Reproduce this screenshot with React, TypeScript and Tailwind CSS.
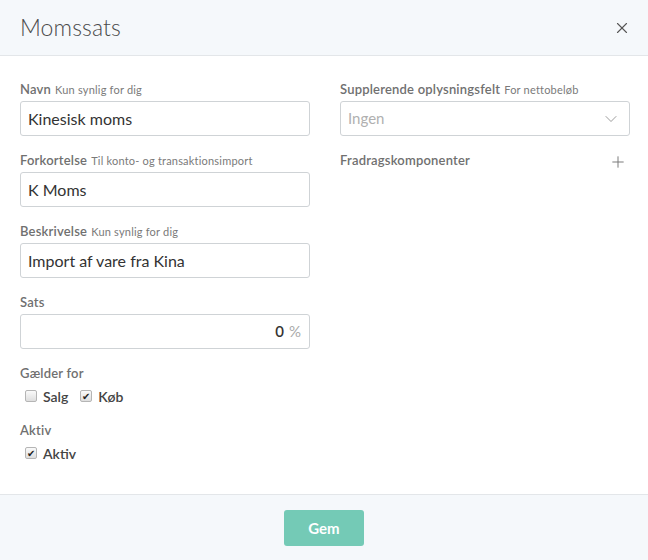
import { X, ChevronDown, Plus } from "lucide-react";

function Label({ title, hint }: { title: string; hint?: string }) {
  return (
    <div className="h-[18px] leading-[18px] mb-[3px] text-[13px] text-[#707070] tracking-[0.2px]">
      <span className="font-semibold">{title}</span>
      {hint && <span className="text-[11px] ml-1 text-[#7a7a7a]">{hint}</span>}
    </div>
  );
}

function Field({ title, hint, value }: { title: string; hint?: string; value: string }) {
  return (
    <div className="mb-[15px]">
      <Label title={title} hint={hint} />
      <div className="h-[35px] border border-[#cfd3d6] rounded-[3px] px-[7px] flex items-center text-[16px] text-[#333]">
        {value}
      </div>
    </div>
  );
}

function Check({ checked, label }: { checked: boolean; label: string }) {
  return (
    <div className="flex items-center">
      <span className="w-[12px] h-[12px] border border-[#b5b5b5] rounded-[2px] bg-gradient-to-b from-[#fafafa] to-[#dedede] flex items-center justify-center text-[10px] leading-none text-[#222] ml-[5px]">
        {checked ? "✔" : ""}
      </span>
      <span className="ml-[6px] text-[14px] font-semibold text-[#444]">{label}</span>
    </div>
  );
}

export default function App() {
  return (
    <div className="w-[648px] h-[560px] bg-white flex flex-col" style={{ fontFamily: "Lato, 'Open Sans', sans-serif" }}>
      <div className="h-[56px] bg-[#f5f8fb] border-b border-[#e3e6e9] flex items-center justify-between pl-[20px] pr-[17px]">
        <h1 className="text-[23px] font-light text-[#4a4a4a] tracking-[0.1px]">Momssats</h1>
        <X size={18} strokeWidth={1.5} className="text-[#555]" />
      </div>
      <div className="flex-1 flex gap-[30px] pl-[20px] pr-[18px] pt-[24px]">
        <div className="flex-1">
          <Field title="Navn" hint="Kun synlig for dig" value="Kinesisk moms" />
          <Field title="Forkortelse" hint="Til konto- og transaktionsimport" value="K Moms" />
          <Field title="Beskrivelse" hint="Kun synlig for dig" value="Import af vare fra Kina" />
          <div className="mb-[15px]">
            <Label title="Sats" />
            <div className="h-[35px] border border-[#cfd3d6] rounded-[3px] px-[8px] flex items-center justify-end text-[15px]">
              <span className="text-[#333] font-semibold">0</span>
              <span className="ml-[5px] text-[#aaa]">%</span>
            </div>
          </div>
          <Label title="Gælder for" />
          <div className="flex items-center gap-[7px] h-[22px]">
            <Check checked={false} label="Salg" />
            <Check checked={true} label="Køb" />
          </div>
          <div className="mt-[14px]">
            <Label title="Aktiv" />
            <div className="h-[22px] flex items-center">
              <Check checked={true} label="Aktiv" />
            </div>
          </div>
        </div>
        <div className="flex-1">
          <Label title="Supplerende oplysningsfelt" hint="For nettobeløb" />
          <div className="h-[35px] border border-[#cfd3d6] rounded-[3px] pl-[7px] pr-[8px] flex items-center justify-between text-[15px] text-[#b0b0b0] mb-[15px]">
            <span>Ingen</span>
            <ChevronDown size={20} strokeWidth={1} className="text-[#888]" />
          </div>
          <div className="flex items-center justify-between">
            <Label title="Fradragskomponenter" />
            <Plus size={18} strokeWidth={1.3} className="text-[#777] mr-[3px]" />
          </div>
        </div>
      </div>
      <div className="h-[66px] bg-[#f5f8fb] border-t border-[#e3e6e9] flex items-center justify-center">
        <button className="w-[80px] h-[36px] rounded-[3px] bg-[#74cab6] text-white font-bold text-[15px] mt-[1px]">
          Gem
        </button>
      </div>
    </div>
  );
}
